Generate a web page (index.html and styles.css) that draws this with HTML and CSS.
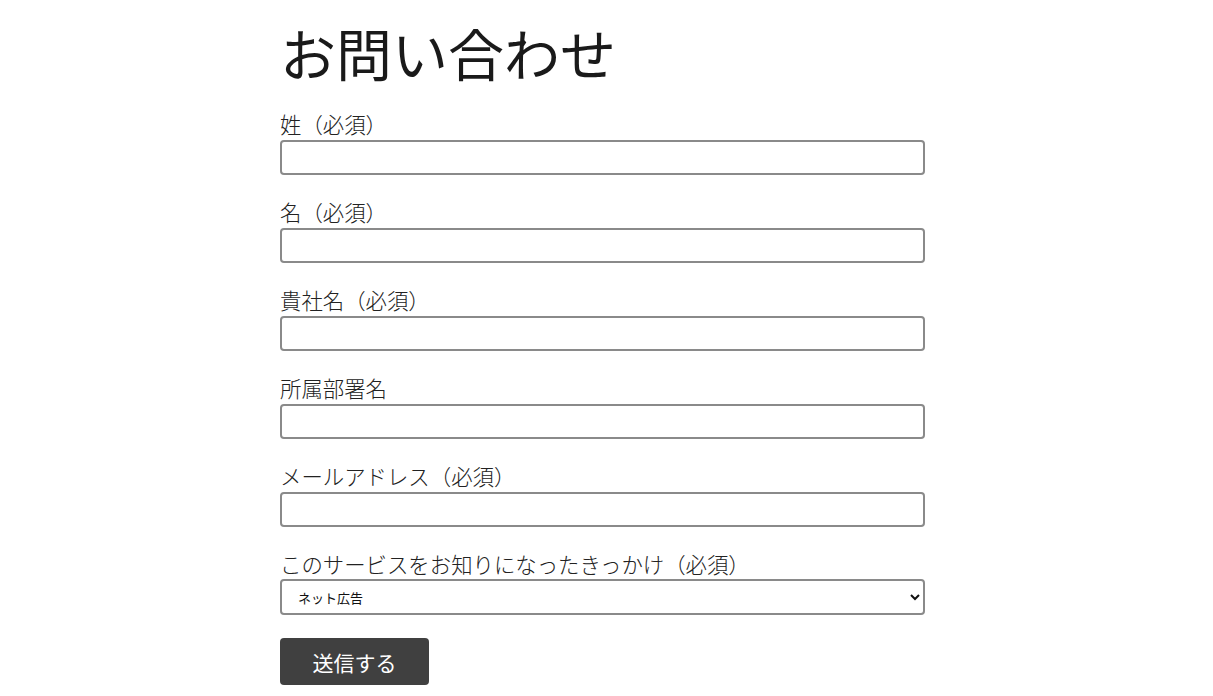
FILE: index.html
```html
<!DOCTYPE html>
<html lang="ja">
<head>
<meta charset="utf-8">
<title>お問い合わせ</title>
<link rel="stylesheet" href="styles.css">
</head>
<body>
<main class="contact">
  <h1 class="title">お問い合わせ</h1>
  <form class="form">
    <div class="field">
      <label class="label">姓（必須）</label>
      <input class="input" type="text">
    </div>
    <div class="field">
      <label class="label">名（必須）</label>
      <input class="input" type="text">
    </div>
    <div class="field">
      <label class="label">貴社名（必須）</label>
      <input class="input" type="text">
    </div>
    <div class="field">
      <label class="label">所属部署名</label>
      <input class="input" type="text">
    </div>
    <div class="field">
      <label class="label">メールアドレス（必須）</label>
      <input class="input" type="text">
    </div>
    <div class="field">
      <label class="label">このサービスをお知りになったきっかけ（必須）</label>
      <select class="input select">
        <option>ネット広告</option>
      </select>
    </div>
    <button class="submit" type="button">送信する</button>
  </form>
</main>
</body>
</html>
```

FILE: styles.css
```css
html, body {
  margin: 0;
  padding: 0;
  background: #ffffff;
}
body {
  font-family: "Noto Sans CJK JP", "Noto Sans", sans-serif;
  color: #222222;
}
.contact {
  width: 645px;
  margin: 0 0 0 280px;
  padding-top: 18px;
}
.title {
  margin: 0;
  font-size: 56px;
  font-weight: 400;
  line-height: 67px;
  color: #1a1a1a;
  margin-left: 0;
}
.form {
  margin-top: 27px;
  display: flex;
  flex-direction: column;
}
.field {
  display: flex;
  flex-direction: column;
  margin-bottom: 25px;
}
.label {
  font-size: 21.4px;
  line-height: 24px;
  padding-bottom: 4px;
  font-weight: 300;
  color: #222222;
}
.input {
  box-sizing: border-box;
  width: 645px;
  height: 35px;
  border: 2px solid #8a8a8a;
  border-radius: 4px;
  background: #ffffff;
  margin: 0;
  padding: 0 12px;
  font-family: "Noto Sans CJK JP", sans-serif;
  font-size: 13px;
}
.select {
  color: #111111;
  margin-top: -1px;
  height: 36px;
}
.submit {
  align-self: flex-start;
  margin-top: -2px;
  width: 149px;
  height: 47px;
  border: none;
  border-radius: 4px;
  background: #404040;
  color: #ffffff;
  font-family: "Noto Sans CJK JP", sans-serif;
  font-size: 21px;
  font-weight: 400;
  cursor: pointer;
}
```
